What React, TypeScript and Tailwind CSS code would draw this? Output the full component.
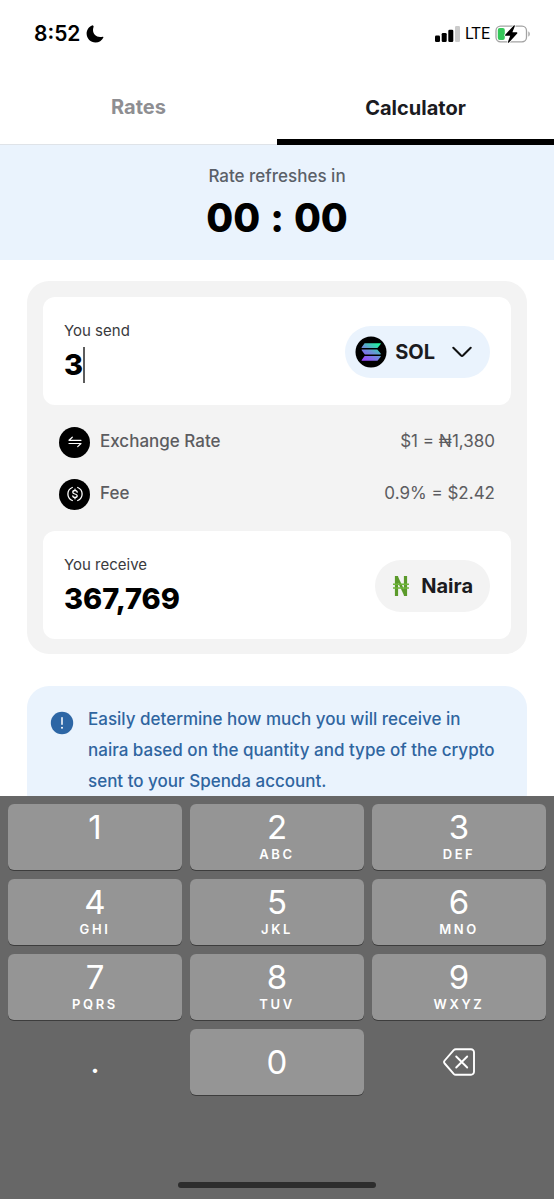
import { useState } from "react";
import type { ReactNode } from "react";

const KEYS = [
  { digit: "1", letters: "" },
  { digit: "2", letters: "ABC" },
  { digit: "3", letters: "DEF" },
  { digit: "4", letters: "GHI" },
  { digit: "5", letters: "JKL" },
  { digit: "6", letters: "MNO" },
  { digit: "7", letters: "PQRS" },
  { digit: "8", letters: "TUV" },
  { digit: "9", letters: "WXYZ" },
];

const StatusBar = () => (
  <div className="flex h-[70px] shrink-0 items-center justify-between pl-[34px] pr-[23px] pb-[3px]">
    <div className="flex items-center gap-1.5 text-black">
      <span className="text-[21px] font-semibold">8:52</span>
      <svg viewBox="0 0 18 18" className="size-[18px]" fill="currentColor">
        <path d="M6.100.4C3 1.600.6 4.800.6 8.500c0 5 4 9 8.900 9 3.500 0 6.500-2.100 7.900-5.100.2-.5-.2-.9-.7-.7-.8.3-1.700.4-2.600.4-4 0-7.100-3.100-7.100-7 0-1.200.2-2.300.6-3.400.2-.7-.8-1.600-1.500-1.300z" />
      </svg>
    </div>
    <div className="flex items-center gap-[5px] text-black">
      <svg viewBox="0 0 25 16" className="h-4 w-[25px]" fill="currentColor">
        <rect x="0" y="9.500" width="5" height="6.500" rx="1.300" />
        <rect x="6.700" y="7" width="5" height="9" rx="1.300" />
        <rect x="13.300" y="3.800" width="5" height="12.200" rx="1.300" />
        <rect x="20" y="0" width="5" height="16" rx="1.300" fill="#cbcbcb" />
      </svg>
      <span className="font-['Roboto',sans-serif] text-base">LTE</span>
      <svg viewBox="0 0 36 18" className="h-[18px] w-9">
        <rect x="1" y="1.200" width="30.500" height="15.600" rx="4.500" fill="none" stroke="#a3a3a3" strokeWidth="1.300" />
        <path d="M33.300 6.500c2 .5 2 4.500 0 5z" fill="#a3a3a3" />
        <rect x="2.800" y="3" width="7" height="12" rx="2" fill="#34c759" />
        <path d="M18.800.6 10.200 9.700c-.4.5-.1 1.100.5 1.100h4.500l-2.300 6.100c-.3.8.5 1.200 1.100.6l8.200-9.100c.4-.5.1-1.100-.5-1.100h-4.300l2.400-6.100c.3-.8-.5-1.200-1-.6z" fill="#000" stroke="#fff" strokeWidth="1.500" paintOrder="stroke" />
      </svg>
    </div>
  </div>
);

const Tabs = () => (
  <nav className="flex h-[75px] shrink-0 border-b border-[#dfe3e8] text-xl font-bold">
    <button className="flex-1 text-[#8e8e92]">Rates</button>
    <button className="-mb-px flex-1 border-b-[6px] border-black pt-1.5 text-[#1b1b1f]">
      Calculator
    </button>
  </nav>
);

const SolanaIcon = () => (
  <svg viewBox="0 0 32 32" className="size-8 shrink-0">
    <defs>
      <linearGradient id="sol" x1="23" y1="7" x2="11" y2="26" gradientUnits="userSpaceOnUse">
        <stop offset="0" stopColor="#19fb9b" />
        <stop offset="0.5" stopColor="#6c8fd8" />
        <stop offset="1" stopColor="#9945ff" />
      </linearGradient>
    </defs>
    <circle cx="16" cy="16" r="15.500" fill="#000" />
    <g fill="url(#sol)">
      <path d="M10 7.200h15.300c.5 0 .7.500.4.800l-3 3.700c-.2.200-.5.400-.8.400H7.100c-.5 0-.7-.5-.4-.8l2.700-3.700c.2-.3.300-.4.600-.4z" />
      <path d="M7.100 13.500h14.800c.3 0 .6.200.8.400l3 3.700c.3.300.1.800-.4.800H10c-.3 0-.4-.1-.6-.4l-2.700-3.700c-.3-.3-.1-.8.400-.8z" />
      <path d="M10 19.900h15.300c.5 0 .7.500.4.800l-3 3.700c-.2.200-.5.400-.8.400H7.100c-.5 0-.7-.5-.4-.8l2.700-3.700c.2-.3.300-.4.600-.4z" />
    </g>
  </svg>
);

const NairaIcon = () => (
  <svg viewBox="0 0 18 22" className="h-[22px] w-[18px] shrink-0" fill="none" stroke="#5b9a2b">
    <path d="M4.500 1v20M13.500 1v20" strokeWidth="3.200" />
    <path d="M4.500 1.500 13.500 20.500" strokeWidth="2.600" />
    <path d="M1 9.200h16M1 13h16" stroke="#6fb53a" strokeWidth="1.500" />
  </svg>
);

const RateRow = ({ icon, label, value }: { icon: ReactNode; label: string; value: string }) => (
  <div className="flex h-8 items-center justify-between text-[17px] text-[#5c5c60]">
    <div className="flex items-center gap-2.5">
      <span className="flex size-[31px] items-center justify-center rounded-full bg-black text-white">
        {icon}
      </span>
      <span className="font-medium">{label}</span>
    </div>
    <span>{value}</span>
  </div>
);

const ExchangeIcon = () => (
  <svg viewBox="0 0 16 16" className="size-4" fill="none" stroke="currentColor" strokeWidth="1.200" strokeLinecap="round" strokeLinejoin="round">
    <path d="M14 6.300H2l3.300-3.100M2 9.500h12l-3.300 3.100" />
  </svg>
);

const FeeIcon = () => (
  <svg viewBox="0 0 16 16" className="size-4" fill="none" stroke="currentColor" strokeWidth="1.300" strokeLinecap="round">
    <path d="M5.300 1.500a7 7 0 0 0 0 13M10.700 1.500a7 7 0 0 1 0 13" />
    <path d="M10.200 6.200c0-1-.9-1.700-2.200-1.700s-2.200.7-2.200 1.700c0 2.300 4.400 1.300 4.400 3.600 0 1-.9 1.700-2.200 1.700s-2.200-.7-2.200-1.700M8 3.200v1.300M8 11.500v1.300" />
  </svg>
);

const Calculator = ({ amount, onChange }: { amount: string; onChange: (v: string) => void }) => (
  <section className="rounded-[22px] bg-[#f3f3f3] px-4 pt-4 pb-[15px]">
    <div className="flex h-[108px] items-center justify-between rounded-xl bg-white px-[21px] pt-0.5">
      <div>
        <label htmlFor="amount" className="block text-[15px] leading-5 text-[#3a3a3d]">
          You send
        </label>
        <div className="mt-1.5 flex h-9 items-center">
          <input
            id="amount"
            inputMode="decimal"
            value={amount}
            onChange={(e) => onChange(e.target.value)}
            className="field-sizing-content max-w-[220px] bg-transparent text-[29px] leading-9 font-extrabold text-black caret-transparent outline-none"
          />
          <span className="h-9 w-0.5 bg-[#5c5c5c]" />
        </div>
      </div>
      <button className="flex h-[52px] items-center rounded-full bg-[#eaf3fd] pl-2.5 pr-[18px] text-xl font-bold text-[#1b1b1f]">
        <SolanaIcon />
        <span className="ml-2">SOL</span>
        <svg viewBox="0 0 20 12" className="ml-[17px] h-3 w-5" fill="none" stroke="#111" strokeWidth="2" strokeLinecap="round" strokeLinejoin="round">
          <path d="M1.300 1.800 8.800 9.300q1.200 1.100 2.400 0l7.500-7.500" />
        </svg>
      </button>
    </div>

    <div className="flex flex-col gap-5 px-4 py-[21px]">
      <RateRow icon={<ExchangeIcon />} label="Exchange Rate" value="$1 = ₦1,380" />
      <RateRow icon={<FeeIcon />} label="Fee" value="0.9% = $2.42" />
    </div>

    <div className="flex h-[108px] items-center justify-between rounded-xl bg-white px-[21px] pt-0.5">
      <div>
        <p className="text-[15px] leading-5 text-[#3a3a3d]">You receive</p>
        <p className="mt-1.5 text-[29px] leading-9 font-extrabold text-black">367,769</p>
      </div>
      <div className="flex h-[52px] items-center gap-[11px] rounded-full bg-[#f3f3f3] pl-[17px] pr-[17px] text-xl font-bold text-[#1b1b1f]">
        <NairaIcon />
        Naira
      </div>
    </div>
  </section>
);

const InfoCard = () => (
  <section className="flex gap-3.5 rounded-[22px] bg-[#eaf3fd] px-[23px] py-[18px]">
    <svg viewBox="0 0 24 24" className="mt-[7px] size-6 shrink-0">
      <circle cx="12" cy="12" r="11.200" fill="#2d66a5" />
      <path d="M12 6.800v6.400" stroke="#fff" strokeWidth="1.500" strokeLinecap="round" />
      <circle cx="12" cy="16.800" r="1" fill="#fff" />
    </svg>
    <p className="text-[17px] leading-[31px] font-medium text-[#2f65a0]">
      Easily determine how much you will receive in naira based on the quantity and type of the
      crypto sent to your Spenda account.
    </p>
  </section>
);

const keyClass =
  "flex h-[66px] flex-col items-center rounded-[6px] bg-[#959595] shadow-[0_1px_0_#3d3d3d]";

const Keypad = ({ onKey, onDelete }: { onKey: (k: string) => void; onDelete: () => void }) => (
  <div className="shrink-0 bg-[#676767] px-2 pt-2 pb-[11px] text-white">
    <div className="grid grid-cols-3 gap-x-2 gap-y-[9px]">
      {KEYS.map(({ digit, letters }) => (
        <button key={digit} onClick={() => onKey(digit)} className={keyClass}>
          <span className="mt-1 text-[33px] leading-[38px]">{digit}</span>
          <span className="text-[13px] leading-4 font-semibold tracking-[0.2em]">{letters}</span>
        </button>
      ))}
      <button onClick={() => onKey(".")} className="h-[66px] text-[33px]">
        .
      </button>
      <button onClick={() => onKey("0")} className={`${keyClass} justify-center`}>
        <span className="text-[33px] leading-[38px]">0</span>
      </button>
      <button aria-label="Delete" onClick={onDelete} className="flex h-[66px] items-center justify-center">
        <svg viewBox="0 0 32 28" className="h-7 w-8" fill="none" stroke="currentColor" strokeWidth="1.900" strokeLinecap="round" strokeLinejoin="round">
          <path d="M12.800 1.300H28a3 3 0 0 1 3 3v19.400a3 3 0 0 1-3 3H12.800a3 3 0 0 1-2.100-.9l-9-10.300a2.300 2.300 0 0 1 0-3l9-10.300a3 3 0 0 1 2.100-.9z" />
          <path d="m13.200 8.500 11 11m0-11-11 11" />
        </svg>
      </button>
    </div>
    <div className="mx-auto mt-[87px] h-1.5 w-[198px] rounded-full bg-[#2d2d2d]" />
  </div>
);

const App = () => {
  const [amount, setAmount] = useState("3");

  return (
    <div className="flex h-screen flex-col overflow-hidden bg-white font-['Inter',sans-serif]">
      <StatusBar />
      <Tabs />
      <main className="min-h-0 flex-1 overflow-hidden">
        <div className="flex h-[115px] flex-col items-center bg-[#eaf3fd] pt-[19px]">
          <p className="text-[17px] leading-6 font-medium text-[#5a6068]">Rate refreshes in</p>
          <div className="mt-1.5 flex gap-2.5 text-[39px] leading-12 font-extrabold text-black">
            <span>00</span>
            <span>:</span>
            <span>00</span>
          </div>
        </div>
        <div className="flex flex-col gap-8 px-[27px] pt-[21px]">
          <Calculator amount={amount} onChange={setAmount} />
          <InfoCard />
        </div>
      </main>
      <Keypad
        onKey={(k) => setAmount(amount + k)}
        onDelete={() => setAmount(amount.slice(0, -1))}
      />
    </div>
  );
};

export default App;
